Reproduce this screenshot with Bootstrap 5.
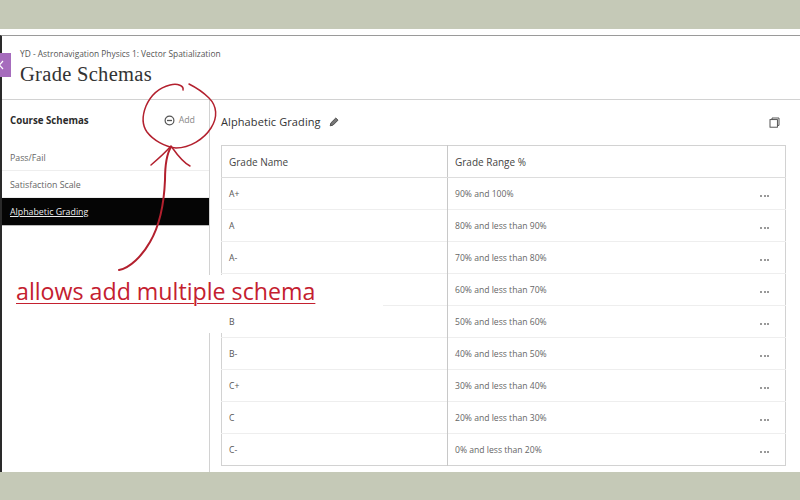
<!doctype html>
<html lang="en">
<head>
<meta charset="utf-8">
<title>Grade Schemas</title>
<link href="https://cdn.jsdelivr.net/npm/bootstrap@5.3.0/dist/css/bootstrap.min.css" rel="stylesheet">
<style>
html,body{height:500px;overflow:hidden}
body{background:#c5c9b7;font-family:"Open Sans",sans-serif;color:#333;position:relative}
.band-top{height:29px}
.band-bottom{height:28px}
.sheet{height:443px;background:#fff;padding-top:6px;overflow:hidden;position:relative}
.sheet-inner{height:437px;border-top:1px solid #9a9a9a;border-left:2px solid #2a2a2a;display:flex;flex-direction:column}
.page-head{height:64px;padding:11px 0 0 18px;border-bottom:1px solid #d2d2d2;flex:none}
.crumb{font-size:8.4px;line-height:13px;color:#555}
.page-title{font-family:"Liberation Serif",serif;font-size:20.5px;line-height:28px;letter-spacing:.3px;color:#333;margin:0;font-weight:400}
.tab-back{position:absolute;left:0;top:24px;width:11px;height:24px;background:#a66cbd;overflow:hidden}
.tab-back svg{display:block;margin-top:7px}
.content{flex:1;min-height:0}
.side{width:208px;flex:none;border-right:1px solid #d2d2d2}
.side-head{height:43px;padding:0 14px 0 8px;margin-bottom:1px}
.side-title{font-size:9.7px;font-weight:700;color:#2b2b2b}
.add-link{font-size:8.8px;color:#888;gap:4px;margin-bottom:2px}
.schema-item{height:27px;line-height:29px;padding:0 8px;font-size:8.8px;color:#666;border-bottom:1px solid #eee;background:#fff}
.schema-item.is-on{height:28px;background:#050505;color:#eee;text-decoration:underline;border-bottom:1px solid #bbb}
.detail{flex:1;padding:0 14px 0 11px;min-width:0}
.detail-head{height:45px;padding-right:6px}
.detail-name{margin-bottom:2px}
.detail-title{font-size:11px;font-weight:400;color:#333;margin:0;letter-spacing:.1px}
.grades{width:565px;margin:0;border:1px solid #d2d2d2;table-layout:fixed;border-collapse:collapse}
.grades th,.grades td{height:32px;padding:2px 7px 0;vertical-align:middle;border-top:1px solid #eee;border-bottom:0;color:#666;font-size:8.6px;font-weight:400;line-height:1}
.grades th{font-size:10px;color:#444;border-top:0;padding-top:0}
.grades tr>*:first-child{width:226px;border-right:1px solid #c8c8c8}
.grades td:first-child{color:#555}
.grades thead tr>*{border-bottom:1px solid #ddd}
.range-cell{display:flex;align-items:center;justify-content:space-between;padding-right:9px}
.more-dots{display:flex;gap:1.5px;padding-top:3px}
.more-dots i{width:2px;height:2px;border-radius:50%;background:#777;display:block}
.note-cover{position:absolute;background:#fff}
.note-cover-a{left:2px;top:275px;width:381px;height:33px}
.note-cover-b{left:205px;top:308px;width:21px;height:25px}
.ink{position:absolute;left:0;top:0;pointer-events:none}
.note-text{position:absolute;left:16px;top:277px;color:#c4202f;font-family:"Open Sans",sans-serif;font-size:23.2px;line-height:28px;text-decoration:underline;text-decoration-thickness:1px;text-underline-offset:3px;white-space:nowrap}
</style>
</head>
<body>
<div class="band-top"></div>
<div class="sheet">
  <div class="sheet-inner">
    <header class="page-head">
      <div class="crumb">YD - Astronavigation Physics 1: Vector Spatialization</div>
      <h1 class="page-title">Grade Schemas</h1>
    </header>
    <div class="content d-flex">
      <aside class="side">
        <div class="side-head d-flex align-items-center justify-content-between">
          <span class="side-title">Course Schemas</span>
          <span class="add-link d-flex align-items-center">
            <svg width="11" height="11" viewBox="0 0 11 11"><circle cx="5.5" cy="5.5" r="4.4" fill="none" stroke="#555" stroke-width="1.2"/><path d="M3 5.5h5" stroke="#555" stroke-width="1.3"/></svg>
            Add
          </span>
        </div>
        <div class="schema-list">
          <div class="schema-item">Pass/Fail</div>
          <div class="schema-item">Satisfaction Scale</div>
          <div class="schema-item is-on">Alphabetic Grading</div>
        </div>
      </aside>
      <main class="detail">
        <div class="detail-head d-flex align-items-center justify-content-between">
          <div class="detail-name d-flex align-items-center gap-2">
            <h2 class="detail-title">Alphabetic Grading</h2>
            <svg width="11" height="11" viewBox="0 0 11 11"><path d="M1.2 9.8l.7-2.9 4.9-4.9 2.2 2.2-4.9 4.9z" fill="#777" stroke="#444" stroke-width=".9"/></svg>
          </div>
          <svg width="11" height="11" viewBox="0 0 11 11"><path d="M3 2.6V1h7v7.4H8.6" fill="none" stroke="#444" stroke-width=".9"/><rect x="1" y="2.6" width="7.4" height="7.6" fill="#fff" stroke="#444" stroke-width=".9"/></svg>
        </div>
        <table class="table grades">
          <thead><tr><th>Grade Name</th><th>Grade Range %</th></tr></thead>
          <tbody>
            <tr><td>A+</td><td><div class="range-cell">90% and 100%<span class="more-dots"><i></i><i></i><i></i></span></div></td></tr>
            <tr><td>A</td><td><div class="range-cell">80% and less than 90%<span class="more-dots"><i></i><i></i><i></i></span></div></td></tr>
            <tr><td>A-</td><td><div class="range-cell">70% and less than 80%<span class="more-dots"><i></i><i></i><i></i></span></div></td></tr>
            <tr><td></td><td><div class="range-cell">60% and less than 70%<span class="more-dots"><i></i><i></i><i></i></span></div></td></tr>
            <tr><td>B</td><td><div class="range-cell">50% and less than 60%<span class="more-dots"><i></i><i></i><i></i></span></div></td></tr>
            <tr><td>B-</td><td><div class="range-cell">40% and less than 50%<span class="more-dots"><i></i><i></i><i></i></span></div></td></tr>
            <tr><td>C+</td><td><div class="range-cell">30% and less than 40%<span class="more-dots"><i></i><i></i><i></i></span></div></td></tr>
            <tr><td>C</td><td><div class="range-cell">20% and less than 30%<span class="more-dots"><i></i><i></i><i></i></span></div></td></tr>
            <tr><td>C-</td><td><div class="range-cell">0% and less than 20%<span class="more-dots"><i></i><i></i><i></i></span></div></td></tr>
          </tbody>
        </table>
      </main>
    </div>
  </div>
  <div class="tab-back"><svg width="11" height="10" viewBox="0 0 11 10"><path d="M3 1L-.5 5 3 9" fill="none" stroke="#fff" stroke-width="1.2"/></svg></div>
</div>
<div class="band-bottom"></div>
<div class="note-cover note-cover-a"></div>
<div class="note-cover note-cover-b"></div>
<svg class="ink" width="800" height="500" viewBox="0 0 800 500">
  <g fill="none" stroke="#b3202e" stroke-width="1.5" stroke-linecap="round" stroke-linejoin="round">
    <path d="M183 90C184 86 178 83 170 85C158 88 150 97 146 106C142 116 142 125 147 132C153 140 165 147 176 148C190 148 204 139 211 128C218 117 217 106 209 98C203 92 195 87 189 84"/>
    <path d="M151 165C158 159 165 153 171 146C176 153 182 162 190 166"/>
  </g>
  <path d="M171 147C166 155 165 165 165 180C164 205 160 225 150 242C142 256 130 268 119 270" fill="none" stroke="#b3202e" stroke-width="2" stroke-linecap="round"/>
</svg>
<div class="note-text">allows add multiple schema</div>
</body>
</html>
